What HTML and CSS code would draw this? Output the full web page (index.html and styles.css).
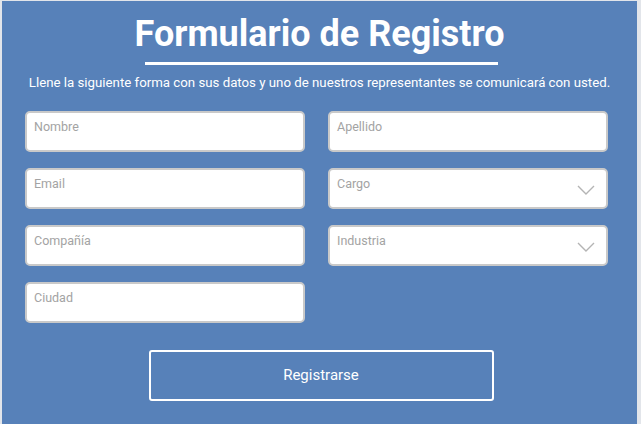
FILE: index.html
```html
<!DOCTYPE html>
<html lang="es">
<head>
<meta charset="utf-8">
<title>Formulario de Registro</title>
<link rel="stylesheet" href="styles.css">
</head>
<body>
<main class="panel">
  <header class="head">
    <h1 class="title">Formulario de Registro</h1>
    <div class="rule"></div>
    <p class="lead">Llene la siguiente forma con sus datos y uno de nuestros representantes se comunicará con usted.</p>
  </header>
  <form class="form">
    <div class="grid">
      <label class="field"><span class="ph">Nombre</span></label>
      <label class="field"><span class="ph">Apellido</span></label>
      <label class="field"><span class="ph">Email</span></label>
      <label class="field select"><span class="ph">Cargo</span>
        <svg class="chev" viewBox="0 0 18 10" width="18" height="10"><path d="M1 1 L9 9 L17 1" fill="none" stroke="#b4b4b4" stroke-width="1.4"/></svg>
      </label>
      <label class="field"><span class="ph">Compañía</span></label>
      <label class="field select"><span class="ph">Industria</span>
        <svg class="chev" viewBox="0 0 18 10" width="18" height="10"><path d="M1 1 L9 9 L17 1" fill="none" stroke="#b4b4b4" stroke-width="1.4"/></svg>
      </label>
      <label class="field"><span class="ph">Ciudad</span></label>
    </div>
    <div class="actions">
      <button type="button" class="btn">Registrarse</button>
    </div>
  </form>
</main>
</body>
</html>
```
FILE: styles.css
```css
html, body {
  margin: 0;
  padding: 0;
}
body {
  background: #e2e5ea;
  font-family: Roboto, "Liberation Sans", sans-serif;
  height: 424px;
  overflow: hidden;
}
.panel {
  margin: 1px 4px 0 2px;
  height: 423px;
  background: #5781b9;
  color: #fff;
  padding-top: 12px;
  box-sizing: border-box;
}
.head {
  display: flex;
  flex-direction: column;
  align-items: center;
}
.title {
  margin: 0;
  font-size: 36px;
  font-weight: 700;
  line-height: 42px;
}
.rule {
  width: 353px;
  height: 3px;
  margin: 7px 0 0 3px;
  background: #fff;
}
.lead {
  margin: 10px 0 0;
  font-size: 13.25px;
  line-height: 16px;
}
.form {
  margin-top: 20px;
  padding-left: 23px;
  width: 583px;
}
.grid {
  display: grid;
  grid-template-columns: 280px 280px;
  column-gap: 23px;
  row-gap: 16px;
}
.field {
  position: relative;
  display: block;
  height: 41px;
  box-sizing: border-box;
  background: #fff;
  border: 2px solid #c9c9c9;
  border-radius: 5px;
  padding: 3px 7px 0;
}
.ph {
  font-size: 12.5px;
  line-height: 14px;
  color: #a3a3a3;
}
.chev {
  position: absolute;
  right: 11px;
  top: 15px;
}
.actions {
  display: flex;
  justify-content: center;
  margin-top: 27px;
  padding-left: 9px;
}
.btn {
  width: 345px;
  height: 51px;
  background: transparent;
  border: 2px solid #fff;
  border-radius: 3px;
  color: #fff;
  font-family: Roboto, "Liberation Sans", sans-serif;
  font-size: 15px;
  line-height: 18px;
  padding: 0 0 2px;
}
```
